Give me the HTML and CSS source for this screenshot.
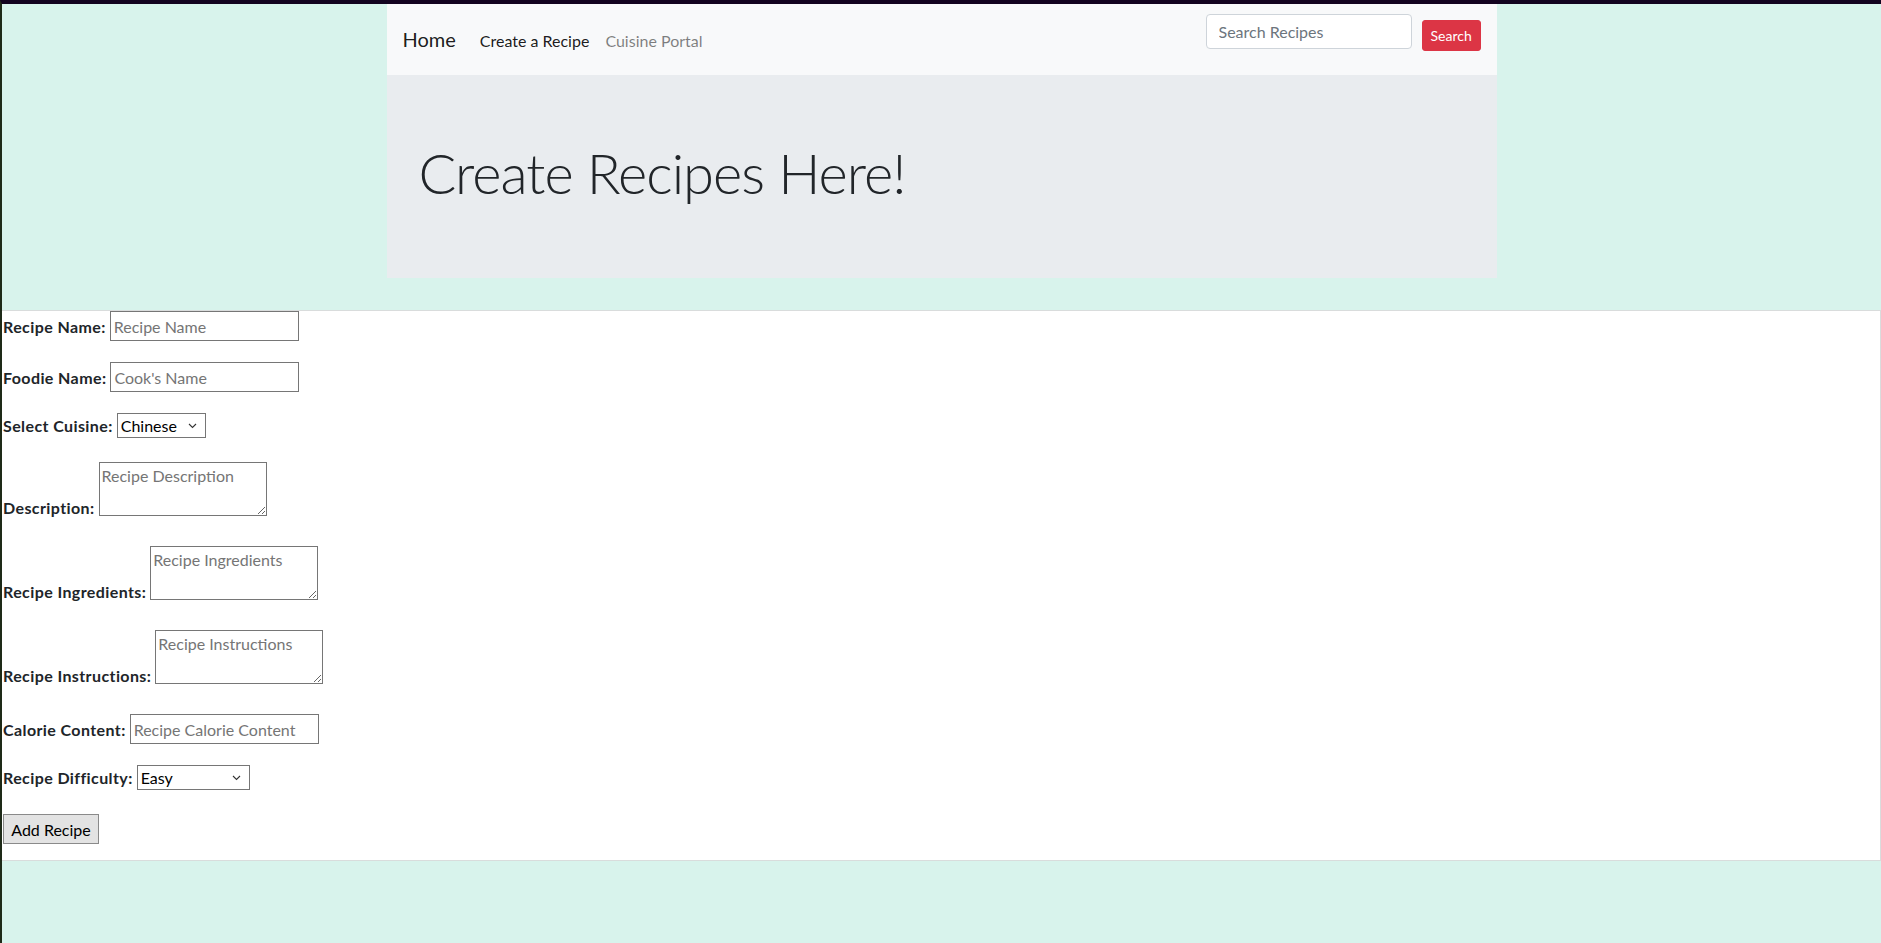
FILE: index.html
```html
<!DOCTYPE html>
<html lang="en">
<head>
<meta charset="utf-8">
<title>Create a Recipe</title>
<link rel="stylesheet" href="styles.css">
</head>
<body>
  <div class="container">
    <nav class="navbar">
      <div class="nav-left">
        <a class="brand" href="#">Home</a>
        <a class="nav-link active" href="#">Create a Recipe</a>
        <a class="nav-link" href="#">Cuisine Portal</a>
      </div>
      <form class="nav-search">
        <input class="search-input" type="search" placeholder="Search Recipes">
        <button class="btn-search" type="button">Search</button>
      </form>
    </nav>
    <div class="jumbotron">
      <h1 class="display">Create Recipes Here!</h1>
    </div>
  </div>

  <form class="recipe-form">
    <div class="field">
      <label>Recipe Name:</label>
      <input class="text-in" type="text" placeholder="Recipe Name">
    </div>
    <div class="field">
      <label>Foodie Name:</label>
      <input class="text-in" type="text" placeholder="Cook's Name">
    </div>
    <div class="field field-select">
      <label>Select Cuisine:</label>
      <select class="sel sel-cuisine">
        <option>Chinese</option>
        <option>Italian</option>
        <option>Mexican</option>
      </select>
    </div>
    <div class="field field-area">
      <label>Description:</label>
      <textarea class="area" placeholder="Recipe Description"></textarea>
    </div>
    <div class="field field-area">
      <label>Recipe Ingredients:</label>
      <textarea class="area" placeholder="Recipe Ingredients"></textarea>
    </div>
    <div class="field field-area">
      <label>Recipe Instructions:</label>
      <textarea class="area" placeholder="Recipe Instructions"></textarea>
    </div>
    <div class="field">
      <label>Calorie Content:</label>
      <input class="text-in" type="text" placeholder="Recipe Calorie Content">
    </div>
    <div class="field field-select">
      <label>Recipe Difficulty:</label>
      <select class="sel sel-diff">
        <option>Easy</option>
        <option>Medium</option>
        <option>Hard</option>
      </select>
    </div>
    <button class="btn-add" type="button">Add Recipe</button>
  </form>
</body>
</html>
```

FILE: styles.css
```css
* { box-sizing: border-box; }

html, body {
  margin: 0;
  padding: 0;
}

body {
  background: #d8f3ec;
  border-top: 4px solid #12031f;
  border-left: 2px solid #1e2a18;
  min-height: 943px;
  font-family: "Lato", "Open Sans", sans-serif;
  font-size: 16px;
  line-height: 1.5;
  color: #212529;
}

.container {
  width: 1110px;
  margin: 0 auto;
}

/* navbar */
.navbar {
  display: flex;
  justify-content: space-between;
  align-items: center;
  height: 71px;
  padding: 8px 16px;
  background: #f8f9fa;
}

.nav-left {
  display: flex;
  align-items: baseline;
}

.brand {
  font-size: 20px;
  line-height: 30px;
  padding: 5px 0;
  margin-right: 16px;
  color: rgba(0, 0, 0, 0.9);
  text-decoration: none;
}

.nav-link {
  padding: 8px;
  line-height: 24px;
  color: rgba(0, 0, 0, 0.5);
  text-decoration: none;
}

.nav-link.active {
  color: rgba(0, 0, 0, 0.9);
}

.nav-search {
  display: flex;
  align-self: flex-start;
  align-items: flex-start;
  margin: 0;
}

.search-input {
  width: 206px;
  height: 35px;
  margin-top: 2px;
  margin-right: 10px;
  padding: 6px 12px;
  font-family: inherit;
  font-size: 16px;
  color: #495057;
  background: #fff;
  border: 1px solid #ced4da;
  border-radius: 4px;
  outline: none;
}

.search-input::placeholder { color: #6c757d; }

.btn-search {
  width: 59px;
  height: 31px;
  margin-top: 8px;
  padding: 4px 8px;
  font-family: inherit;
  font-size: 14px;
  line-height: 21px;
  color: #fff;
  background: #dc3545;
  border: 1px solid #dc3545;
  border-radius: 3px;
}

/* jumbotron */
.jumbotron {
  background: #e9ecef;
  padding: 64px 32px;
  margin-bottom: 32px;
}

.display {
  margin: 0 0 8px;
  font-size: 56px;
  font-weight: 300;
  line-height: 1.2;
  letter-spacing: -1px;
  color: #212529;
}

/* form */
.recipe-form {
  background: #fff;
  border: 1px solid #d9dcdc;
  border-left: none;
  padding: 0 0 16px 1px;
}

.field {
  display: flex;
  align-items: baseline;
  gap: 4px;
  margin-bottom: 21px;
}

.field label {
  font-weight: 700;
  line-height: 24px;
  letter-spacing: 0.4px;
}

.field-select { margin-bottom: 24px; }

.field-area {
  align-items: flex-end;
  margin-bottom: 30px;
}

.field-area label { margin-bottom: -4px; }

.text-in {
  width: 189px;
  height: 30px;
  padding: 0 3px;
  font-family: inherit;
  font-size: 16px;
  color: #000;
  border: 1px solid #767676;
  border-radius: 0;
  background: #fff;
}

.text-in::placeholder,
.area::placeholder { color: #757575; }

.sel {
  -webkit-appearance: none;
  appearance: none;
  height: 25px;
  padding: 0 20px 0 3px;
  font-family: inherit;
  font-size: 16px;
  color: #000;
  background: #fff url("data:image/svg+xml;utf8,<svg xmlns='http://www.w3.org/2000/svg' width='9' height='6' viewBox='0 0 9 6'><path d='M1 1l3.5 3.5L8 1' fill='none' stroke='%23333' stroke-width='1.1'/></svg>") no-repeat right 8px center;
  border: 1px solid #767676;
  border-radius: 0;
}

.sel-cuisine { width: 89px; }
.sel-diff { width: 113px; }

.area {
  width: 168px;
  height: 54px;
  padding: 2px;
  font-family: inherit;
  font-size: 16px;
  line-height: 22px;
  border: 1px solid #767676;
  border-radius: 0;
  resize: both;
}

.btn-add {
  display: block;
  width: 96px;
  height: 30px;
  padding: 0 6px;
  font-family: inherit;
  font-size: 16px;
  color: #000;
  background: #e3e3e3;
  border: 1px solid #8a8a8a;
  border-radius: 0;
}
```
